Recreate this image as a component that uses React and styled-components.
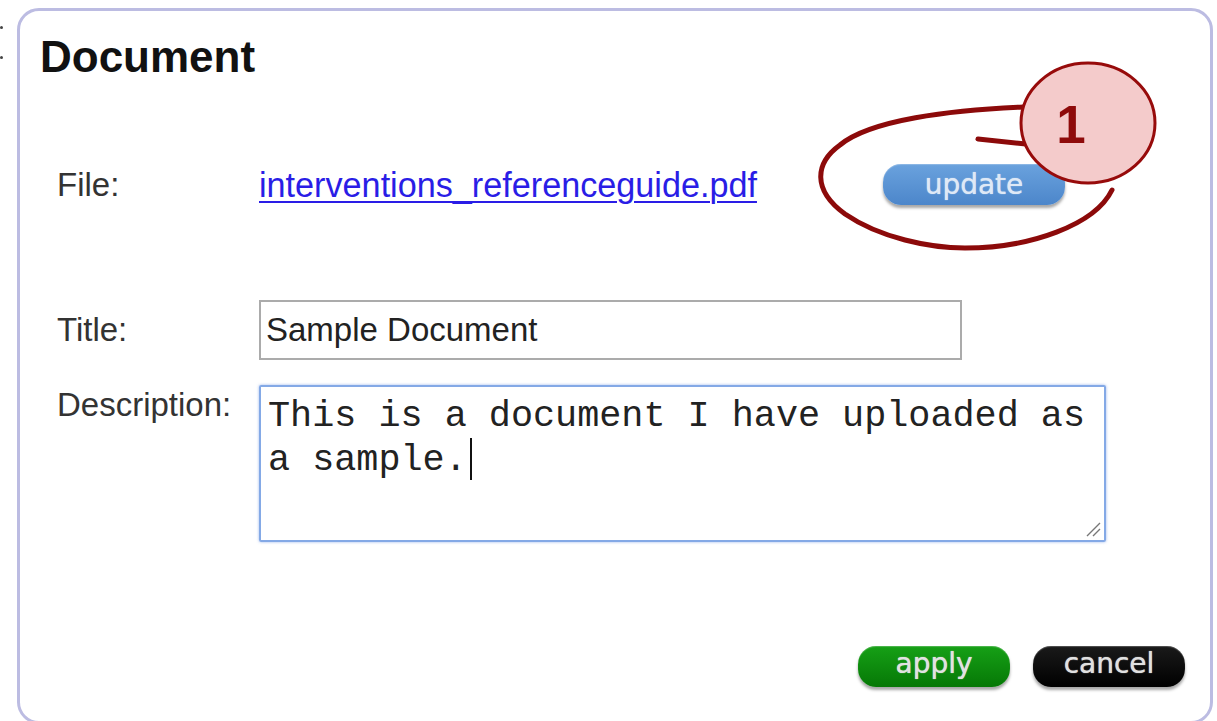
import React from "react";
import styled, { createGlobalStyle } from "styled-components";

const Global = createGlobalStyle`
  html, body {
    margin: 0;
    padding: 0;
    background: #ffffff;
    overflow: hidden;
  }
  body {
    font-family: "Liberation Sans", Arial, sans-serif;
    color: #333;
  }
`;

const Page = styled.div`
  position: relative;
  display: flex;
  width: 1217px;
  height: 721px;
  overflow: hidden;
`;

const Gutter = styled.div`
  width: 17px;
  flex: none;
  display: flex;
  flex-direction: column;
  padding-top: 26px;
  gap: 27px;
  box-sizing: border-box;
`;

const Dot = styled.span`
  display: block;
  width: 3px;
  height: 3px;
  border-radius: 50%;
  background: #444;
`;

const Panel = styled.section`
  flex: none;
  margin-top: 8px;
  width: 1196px;
  height: 716px;
  box-sizing: border-box;
  border: 3px solid #bcbce2;
  border-radius: 22px;
  padding: 21px 25px 0 20px;
  display: flex;
  flex-direction: column;
  background: #fff;
`;

const Heading = styled.h1`
  margin: 0;
  font-size: 44px;
  line-height: 50px;
  font-weight: bold;
  color: #111;
`;

const Form = styled.div`
  display: flex;
  flex-direction: column;
  padding-left: 17px;
`;

const Row = styled.div`
  display: grid;
  grid-template-columns: 202px auto;
  align-items: ${(p) => p.$align || "center"};
  margin-top: ${(p) => p.$mt}px;
`;

const Label = styled.label`
  font-size: 33px;
  line-height: 40px;
  color: #333;
`;

const FileLine = styled.div`
  display: flex;
  align-items: center;
  gap: 126px;
`;

const FileLink = styled.a`
  font-size: 34.2px;
  line-height: 40px;
  color: #2a1de6;
  text-decoration: underline;
  text-decoration-thickness: 2px;
  text-underline-offset: 4px;
`;

const Pill = styled.button`
  box-sizing: border-box;
  width: ${(p) => p.$w}px;
  height: 41px;
  border: none;
  border-radius: 18px;
  padding: 0 0 ${(p) => p.$lift || 0}px;
  font-family: "DejaVu Sans", Verdana, sans-serif;
  font-size: 28px;
  line-height: 1;
  color: ${(p) => p.$ink};
  background: ${(p) => p.$bg};
  text-shadow: 0 0 1px ${(p) => p.$ink};
  box-shadow: 0 3px 3px rgba(0, 0, 0, 0.35), inset 0 1px 1px rgba(255, 255, 255, 0.25);
  cursor: pointer;
`;

const TitleInput = styled.input`
  box-sizing: border-box;
  width: 703px;
  height: 60px;
  border: 2px solid #ababab;
  padding: 0 0 0 5px;
  font-family: "Liberation Sans", Arial, sans-serif;
  font-size: 33px;
  color: #222;
  outline: none;
`;

const TextBox = styled.div`
  position: relative;
  box-sizing: border-box;
  width: 847px;
  height: 157px;
  border: 2px solid #84a9e6;
  border-radius: 2px;
  box-shadow: 0 0 3px rgba(110, 150, 230, 0.7);
  padding: 7px 7px 0 7px;
  font-family: "Liberation Mono", "Courier New", monospace;
  font-size: 36.8px;
  line-height: 44px;
  color: #222;
  white-space: pre;
`;

const Caret = styled.span`
  display: inline-block;
  width: 2px;
  height: 42px;
  margin-left: 3px;
  vertical-align: -10px;
  background: #111;
`;

const Grip = styled.svg`
  position: absolute;
  right: 3px;
  bottom: 3px;
`;

const Footer = styled.div`
  display: flex;
  justify-content: flex-end;
  gap: 23px;
  margin-top: 104px;
`;

const Marks = styled.svg`
  position: absolute;
  left: 0;
  top: 0;
  pointer-events: none;
`;

export default function App() {
  return (
    <Page>
      <Global />
      <Gutter>
        <Dot />
        <Dot />
      </Gutter>
      <Panel>
        <Heading>Document</Heading>
        <Form>
          <Row $mt={82}>
            <Label>File:</Label>
            <FileLine>
              <FileLink href="#">interventions_referenceguide.pdf</FileLink>
              <Pill
                $w={182}
                $ink="#dfe9f6"
                $bg="linear-gradient(#6aa2de, #4c86ca)"
              >
                update
              </Pill>
            </FileLine>
          </Row>
          <Row $mt={95}>
            <Label>Title:</Label>
            <TitleInput defaultValue="Sample Document" />
          </Row>
          <Row $mt={25} $align="start">
            <Label>Description:</Label>
            <TextBox role="textbox">
              {"This is a document I have uploaded as\na sample."}
              <Caret />
              <Grip width="16" height="16" viewBox="0 0 16 16">
                <path d="M2 15 L15 2 M8 15 L15 8" stroke="#777" strokeWidth="1.4" />
              </Grip>
            </TextBox>
          </Row>
        </Form>
        <Footer>
          <Pill
            $w={152}
            $lift={6}
            $ink="#e2e2e2"
            $bg="linear-gradient(#16a016, #067806)"
          >
            apply
          </Pill>
          <Pill
            $w={152}
            $lift={6}
            $ink="#e0e0e0"
            $bg="linear-gradient(#1a1a1a, #000)"
          >
            cancel
          </Pill>
        </Footer>
      </Panel>
      <Marks width="1217" height="721" viewBox="0 0 1217 721">
        <path
          d="M1024 107 C 950 110, 870 120, 840 145 C 815 163, 812 190, 845 214 C 880 238, 930 248, 965 248 C 1030 248, 1095 225, 1112 190"
          fill="none"
          stroke="#8c0a0a"
          strokeWidth="5"
          strokeLinecap="round"
        />
        <path d="M978 139 L1026 144" stroke="#8c0a0a" strokeWidth="5" strokeLinecap="round" />
        <ellipse cx="1088" cy="123" rx="67" ry="60" fill="#f4cbcb" stroke="#970b0b" strokeWidth="3" />
        <text
          x="1071"
          y="143"
          textAnchor="middle"
          fontFamily="Liberation Sans, Arial, sans-serif"
          fontWeight="bold"
          fontSize="53"
          fill="#8e0a0a"
        >
          1
        </text>
      </Marks>
    </Page>
  );
}
